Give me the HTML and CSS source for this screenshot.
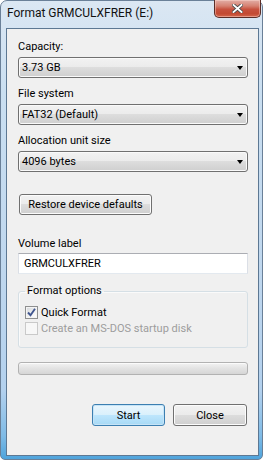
FILE: index.html
```html
<!DOCTYPE html>
<html lang="en">
<head>
    <meta charset="UTF-8">
    <meta name="viewport" content="width=device-width, initial-scale=1.0">
    <title>Format GRMCULXFRER (E:)</title>
    <link rel="stylesheet" href="styles.css">
</head>
<body>
    <div class="window">
        <div class="titlebar">
            <span class="title">Format GRMCULXFRER (E:)</span>
            <button class="close-btn" aria-label="Close">
                <svg width="11" height="9" viewBox="0 0 11 9">
                    <path d="M1.5 1 L9.5 8 M9.5 1 L1.5 8" stroke="#4a4a4a" stroke-width="3.6" stroke-linecap="square"/>
                    <path d="M1.5 1 L9.5 8 M9.5 1 L1.5 8" stroke="#fff" stroke-width="1.8" stroke-linecap="square"/>
                </svg>
            </button>
        </div>

        <div class="client">
            <div class="field">
                <label>Capacity:</label>
                <div class="combo"><span>3.73 GB</span><span class="arrow"></span></div>
            </div>
            <div class="field">
                <label>File system</label>
                <div class="combo"><span>FAT32 (Default)</span><span class="arrow"></span></div>
            </div>
            <div class="field">
                <label>Allocation unit size</label>
                <div class="combo"><span>4096 bytes</span><span class="arrow"></span></div>
            </div>

            <button class="btn restore-btn">Restore device defaults</button>

            <div class="field volume">
                <label>Volume label</label>
                <input class="textbox" type="text" value="GRMCULXFRER">
            </div>

            <fieldset class="group">
                <legend>Format options</legend>
                <div class="check">
                    <span class="box">
                        <svg width="11" height="11" viewBox="0 0 11 11">
                            <path d="M2 5.5 L4.5 8.2 L9 1.8" fill="none" stroke="#41568f" stroke-width="1.9"/>
                        </svg>
                    </span>
                    Quick Format
                </div>
                <div class="check disabled">
                    <span class="box"></span>
                    Create an MS-DOS startup disk
                </div>
            </fieldset>

            <div class="progress"></div>

            <div class="actions">
                <button class="btn default-btn start-btn">Start</button>
                <button class="btn close-action">Close</button>
            </div>
        </div>
    </div>
</body>
</html>
```

FILE: styles.css
```css
body {
    margin: 0;
    background-color: #ffffff;
    font-family: Roboto, "Open Sans", sans-serif;
    font-size: 11px;
    color: #000;
}

.window {
    width: 263px;
    height: 460px;
    box-sizing: border-box;
    display: flex;
    flex-direction: column;
    padding: 0 3px 3px 5px;
    border: 1px solid #6a8098;
    border-radius: 7px 7px 5px 5px;
    background: linear-gradient(180deg, #dbe7f3 0%, #cadff1 20%, #bfd7ee 60%, #b3d1ee 85%, #7fbbe6 95%, #4fa4dc 100%);
}

.titlebar {
    height: 27px;
    display: flex;
    justify-content: space-between;
    align-items: flex-start;
    margin-right: -2px;
}

.title {
    padding: 4px 0 0 1px;
    line-height: 16px;
    font-size: 12px;
    color: #111;
}

.close-btn {
    width: 47px;
    height: 18px;
    margin-top: -1px;
    padding: 0;
    display: flex;
    align-items: center;
    justify-content: center;
    border: 1px solid #5b2d27;
    border-top: none;
    border-radius: 0 0 5px 5px;
    background: linear-gradient(180deg, #e2aea6 0%, #d68272 35%, #c7513e 55%, #c34a33 80%, #d4664c 100%);
    box-shadow: inset 0 0 0 1px rgba(255, 220, 210, 0.45);
}

.client {
    flex: 1;
    padding: 10px 10px 0 11px;
    border: 1px solid #5d7893;
    background-color: #f0f0f0;
}

.field {
    margin-bottom: 8px;
}

.field label {
    display: block;
    line-height: 16px;
    margin-bottom: 2px;
}

.combo {
    height: 21px;
    box-sizing: border-box;
    display: flex;
    align-items: center;
    justify-content: space-between;
    padding: 0 4px 0 3px;
    border: 1px solid #707070;
    border-radius: 3px;
    background: linear-gradient(180deg, #f2f2f2 0%, #ebebeb 50%, #dddddd 50%, #cfcfcf 100%);
    box-shadow: inset 0 0 0 1px #fafafa;
}

.arrow {
    width: 0;
    height: 0;
    border-left: 3.5px solid transparent;
    border-right: 3.5px solid transparent;
    border-top: 4px solid #000;
    margin-top: 1px;
}

.btn {
    height: 22px;
    box-sizing: border-box;
    padding: 0;
    font-family: inherit;
    font-size: 11px;
    color: #000;
    border: 1px solid #707070;
    border-radius: 3px;
    background: linear-gradient(180deg, #f2f2f2 0%, #ebebeb 50%, #dddddd 50%, #cfcfcf 100%);
    box-shadow: inset 0 0 0 1px #fcfcfc;
}

.restore-btn {
    display: block;
    width: 133px;
    height: 21px;
    margin: 22px 0 0 1px;
}

.volume {
    margin-top: 21px;
    margin-bottom: 0;
}

.volume label {
    margin-bottom: 1px;
}

.textbox {
    display: block;
    width: 230px;
    height: 21px;
    box-sizing: border-box;
    padding: 0 5px;
    font-family: inherit;
    font-size: 11px;
    color: #000;
    border: 1px solid #e3e9ef;
    border-top-color: #abadb3;
    border-left-color: #dbdfe6;
    border-right-color: #dbdfe6;
    background-color: #fff;
    outline: none;
}

.group {
    margin: 9px 0 0;
    padding: 6px 6px 11px;
    border: 1px solid #d5dfe5;
    border-radius: 3px;
    box-shadow: inset 1px 1px 0 #fafafa;
}

.group legend {
    padding: 0 2px;
    line-height: 16px;
}

.check {
    display: flex;
    align-items: center;
    gap: 3px;
    height: 15px;
}

.check + .check {
    margin-top: 1px;
}

.box {
    width: 13px;
    height: 13px;
    box-sizing: border-box;
    display: flex;
    align-items: center;
    justify-content: center;
    border: 1px solid #8e8f8f;
    background: linear-gradient(135deg, #d3d6da 0%, #f3f3f3 60%, #ffffff 100%);
    box-shadow: inset 0 0 0 1px #f4f4f4;
}

.check.disabled {
    color: #9d9d9d;
}

.check.disabled .box {
    border-color: #c9c9c9;
    background: #f7f7f7;
    box-shadow: none;
}

.progress {
    height: 13px;
    box-sizing: border-box;
    margin-top: 14px;
    border: 1px solid #b2b2b2;
    border-radius: 3px;
    background: linear-gradient(180deg, #f3f3f3 0%, #e4e4e4 45%, #d6d6d6 100%);
    box-shadow: inset 0 1px 0 #fbfbfb;
}

.actions {
    display: flex;
    justify-content: flex-end;
    gap: 8px;
    margin-top: 29px;
    padding-right: 1px;
}

.start-btn {
    width: 73px;
}

.close-action {
    width: 74px;
}

.default-btn {
    border-color: #3c7fb1;
    background: linear-gradient(180deg, #eaf6fd 0%, #d9f0fc 50%, #bee6fd 50%, #a7d9f5 100%);
    box-shadow: inset 0 0 0 1px #c6e4f7;
}
```
